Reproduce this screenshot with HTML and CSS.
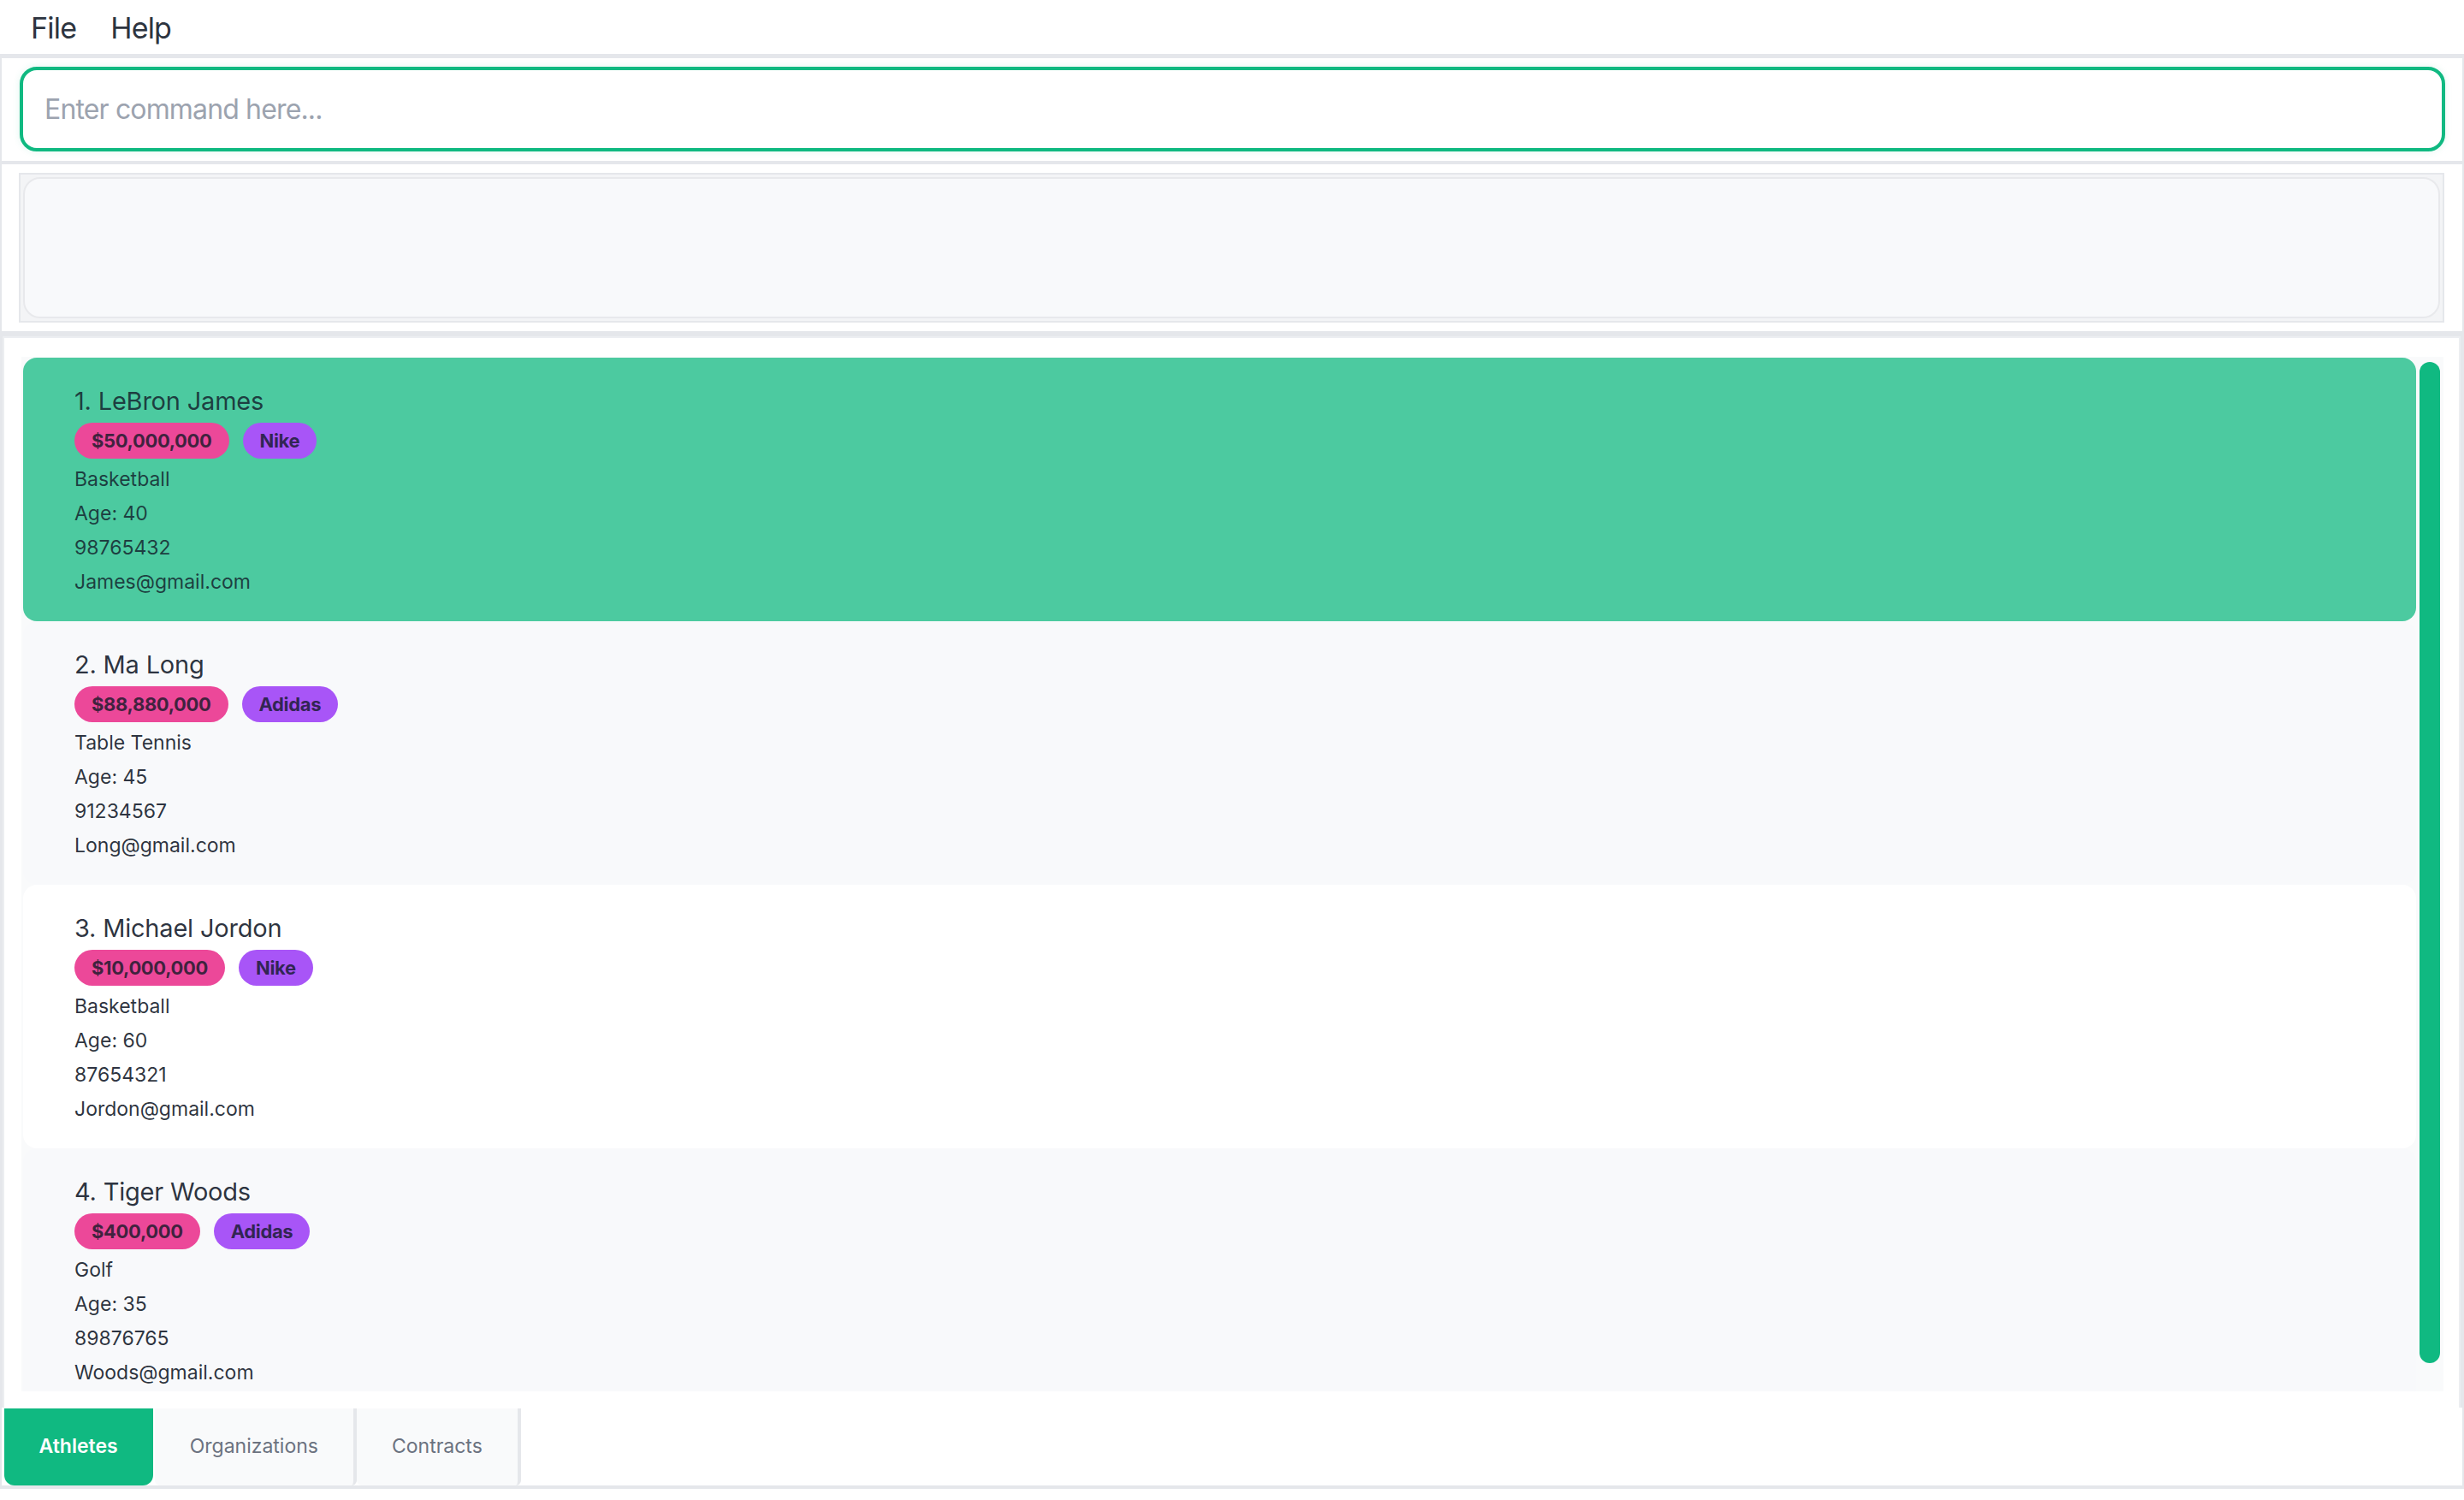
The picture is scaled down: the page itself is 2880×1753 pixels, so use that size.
FILE: index.html
```html
<!DOCTYPE html>
<html lang="en">
<head>
<meta charset="utf-8">
<title>Athletes</title>
<link rel="stylesheet" href="styles.css">
</head>
<body>
<div class="menubar">
  <span class="menu-item">File</span>
  <span class="menu-item">Help</span>
</div>
<div class="main">
  <div class="command-panel">
    <div class="command-box"><span class="placeholder">Enter command here...</span></div>
  </div>
  <div class="result-panel">
    <div class="result-frame"><div class="result-box"></div></div>
  </div>
  <div class="list-panel">
    <div class="list-view">
      <div class="cards">
        <div class="card selected">
          <div class="card-title">1. LeBron James</div>
          <div class="tags"><span class="tag tag-price">$50,000,000</span><span class="tag tag-org">Nike</span></div>
          <div class="field">Basketball</div>
          <div class="field">Age: 40</div>
          <div class="field">98765432</div>
          <div class="field">James@gmail.com</div>
        </div>
        <div class="card alt">
          <div class="card-title">2. Ma Long</div>
          <div class="tags"><span class="tag tag-price">$88,880,000</span><span class="tag tag-org">Adidas</span></div>
          <div class="field">Table Tennis</div>
          <div class="field">Age: 45</div>
          <div class="field">91234567</div>
          <div class="field">Long@gmail.com</div>
        </div>
        <div class="card plain">
          <div class="card-title">3. Michael Jordon</div>
          <div class="tags"><span class="tag tag-price">$10,000,000</span><span class="tag tag-org">Nike</span></div>
          <div class="field">Basketball</div>
          <div class="field">Age: 60</div>
          <div class="field">87654321</div>
          <div class="field">Jordon@gmail.com</div>
        </div>
        <div class="card alt">
          <div class="card-title">4. Tiger Woods</div>
          <div class="tags"><span class="tag tag-price">$400,000</span><span class="tag tag-org">Adidas</span></div>
          <div class="field">Golf</div>
          <div class="field">Age: 35</div>
          <div class="field">89876765</div>
          <div class="field">Woods@gmail.com</div>
        </div>
      </div>
      <div class="scrollbar"><div class="thumb"></div></div>
    </div>
  </div>
  <div class="tabbar">
    <div class="tab active">Athletes</div>
    <div class="tab">Organizations</div>
    <div class="tab">Contracts</div>
  </div>
</div>
</body>
</html>
```
FILE: styles.css
```css
* { box-sizing: border-box; }

body {
  margin: 0;
  background: #ffffff;
  font-family: Inter, "Noto Sans", sans-serif;
  color: #1f2937;
}

.menubar {
  height: 63px;
  display: flex;
  align-items: flex-start;
  padding: 13px 0 0 16px;
  background: #ffffff;
}

.menu-item {
  font-size: 34px;
  line-height: 40px;
  letter-spacing: -0.8px;
  padding: 0 20px;
  color: #2d3440;
}

.main {
  background: #e5e7eb;
  padding: 5px 2px 4px;
  display: flex;
  flex-direction: column;
}

.command-panel {
  background: #ffffff;
  height: 120px;
  padding: 10px 20px 0 21px;
}

.command-box {
  height: 99px;
  border: 4px solid #10b981;
  border-radius: 20px;
  display: flex;
  align-items: center;
  padding-left: 25px;
  background: #ffffff;
  box-shadow: 0 0 8px rgba(16, 185, 129, 0.12);
}

.placeholder {
  font-size: 32px;
  line-height: 39px;
  letter-spacing: -0.85px;
  color: #9ca3af;
}

.result-panel {
  margin-top: 4px;
  background: #ffffff;
  height: 195px;
  padding: 10px 21px 10px 20px;
}

.result-frame {
  height: 175px;
  border: 2px solid #e5e7eb;
  padding: 3px;
  background: #f3f4f6;
}

.result-box {
  height: 100%;
  background: #f8f9fb;
  border: 2px solid #e8e9ec;
  border-radius: 20px;
}

.list-panel {
  margin: 6px 2px 0 1px;
  height: 1252px;
  border: 2px solid #eceef1;
  border-bottom: none;
  background: #ffffff;
  padding: 22px 18px 19px 20px;
}

.list-view {
  height: 100%;
  display: flex;
  background: #f9fafb;
}

.cards {
  flex: 1;
  overflow: hidden;
  padding: 1px 0 0 2px;
}

.card {
  height: 308px;
  padding: 33px 60px 0;
  border-radius: 16px;
  color: rgba(17, 24, 39, 0.9);
}

.card.selected {
  background: #4ccaa0;
  color: rgba(17, 24, 39, 0.8);
}

.card.alt { background: #f8f9fb; }
.card.plain { background: #ffffff; }

.card-title {
  font-size: 29px;
  line-height: 35px;
  letter-spacing: -0.2px;
}

.tags {
  display: flex;
  gap: 16px;
  margin: 8px 0 4px;
}

.tag {
  height: 42px;
  padding: 0 20px;
  border-radius: 21px;
  font-size: 22px;
  font-weight: 700;
  line-height: 42px;
  letter-spacing: -0.35px;
  color: rgba(17, 24, 39, 0.8);
}

.tag-price { background: #ec4899; }
.tag-org { background: #a855f7; }

.field {
  font-size: 23px;
  line-height: 40px;
}

.scrollbar {
  width: 32px;
  padding: 6px 4px 33px;
}

.thumb {
  height: 100%;
  background: #10b981;
  border-radius: 12px;
}

.tabbar {
  background: #ffffff;
  height: 91px;
  display: flex;
  padding: 1px 0 0 2.5px;
}

.tab {
  height: 90px;
  padding: 0 41px 3px;
  font-size: 23px;
  line-height: 28px;
  display: flex;
  align-items: center;
  background: #f9fafb;
  color: #6b7280;
  border-right: 4px solid #e5e7eb;
  border-radius: 0 0 6px 6px;
}

.tab.active {
  background: #10b981;
  color: #ffffff;
  font-weight: 600;
  border-right: none;
  border-radius: 0 0 12px 12px;
  margin-right: 2px;
}
```
